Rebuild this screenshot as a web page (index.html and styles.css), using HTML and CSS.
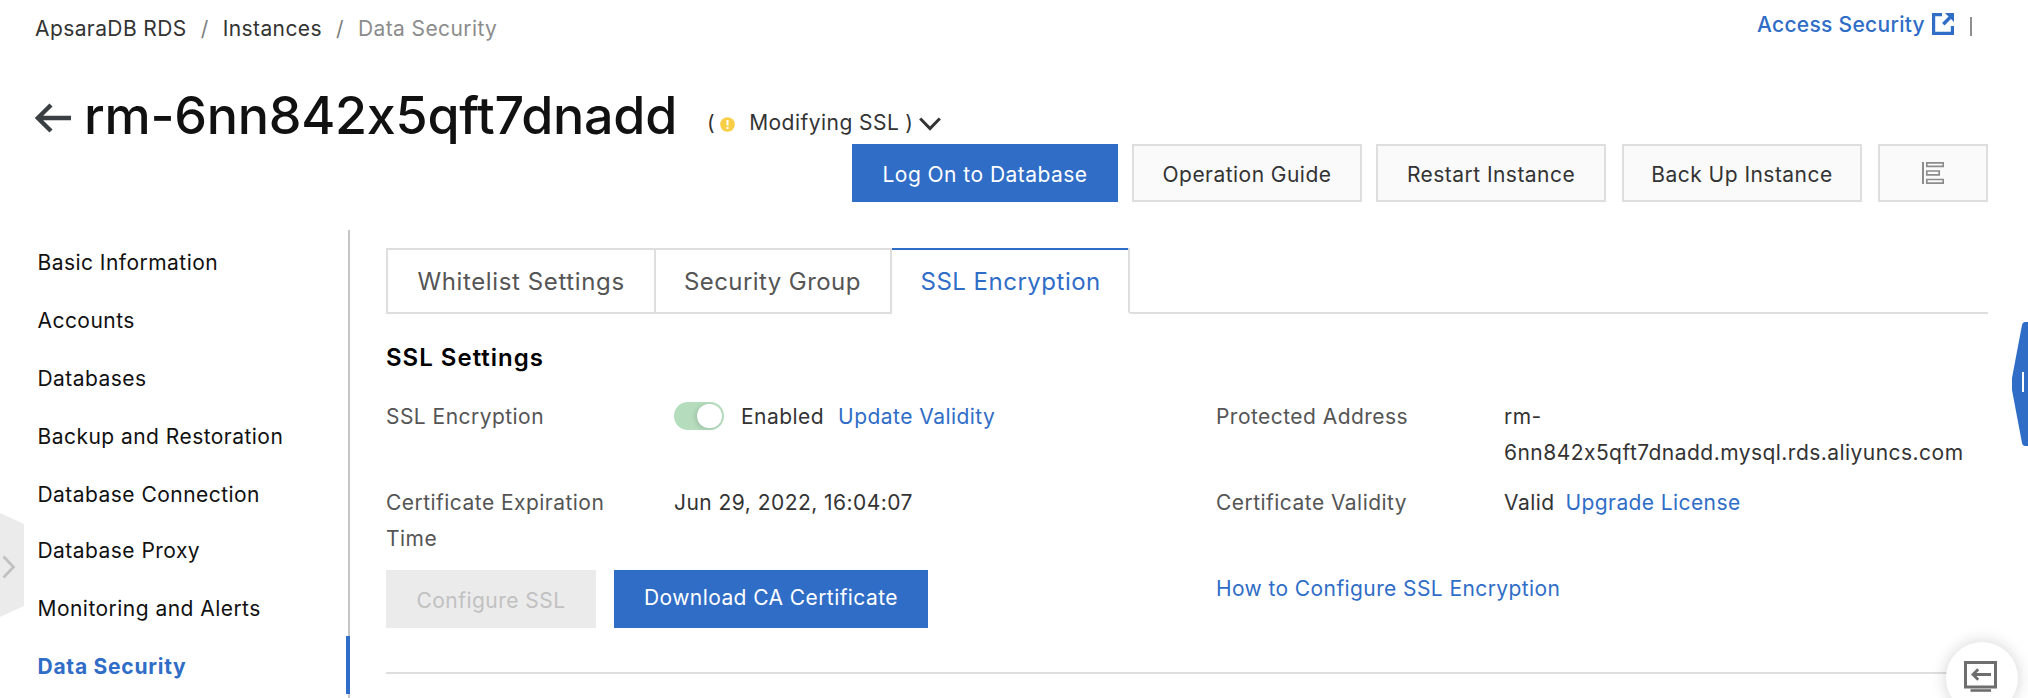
FILE: index.html
```html
<!DOCTYPE html>
<html lang="en">
<head>
<meta charset="utf-8">
<title>Data Security - ApsaraDB RDS</title>
<link rel="stylesheet" href="styles.css">
</head>
<body>
<header class="header">
  <div class="topbar">
    <nav class="crumbs">
      <a>ApsaraDB RDS</a><span class="sep">/</span><a>Instances</a><span class="sep">/</span><span class="current">Data Security</span>
    </nav>
    <div class="toplinks">
      <a class="access">Access Security</a>
      <svg class="ext" width="22" height="22" viewBox="0 0 22 22"><path d="M10 1.6H1.6V20.4H20.4V13" fill="none" stroke="#2f6dc7" stroke-width="3.2"/><path d="M11.3 11.2L18 4.5" stroke="#2f6dc7" stroke-width="3.4"/><path d="M13 0H22V9Z" fill="#2f6dc7"/></svg>
      <i class="bar"></i>
    </div>
  </div>
  <div class="titlebar">
    <svg class="back" width="36" height="30" viewBox="0 0 36 30"><path d="M36 15H3M16 2L2.800 15L16 28" fill="none" stroke="#3a3f44" stroke-width="4.400"/></svg>
    <h1>rm-6nn842x5qft7dnadd</h1>
    <div class="status">
      <span>(</span>
      <svg class="warn" width="15" height="15" viewBox="0 0 15 15"><circle cx="7.500" cy="7.500" r="7.300" fill="#f8ce46"/><path d="M7.500 3V8.600M7.500 10V12" stroke="#fff" stroke-width="2"/></svg>
      <span class="state">Modifying SSL</span><span class="close">)</span>
      <svg class="chev" width="22" height="14" viewBox="0 0 22 14"><path d="M1.200 1.500L11 11.500L20.800 1.500" fill="none" stroke="#333" stroke-width="3"/></svg>
    </div>
  </div>
  <div class="actions">
    <button class="btn primary logon">Log On to Database</button>
    <button class="btn guide">Operation Guide</button>
    <button class="btn restart">Restart Instance</button>
    <button class="btn backup">Back Up Instance</button>
    <button class="btn iconbtn"><svg width="22" height="22" viewBox="0 0 22 22" fill="none" stroke="#8c8c8c"><path d="M1 0V22" stroke-width="2"/><path d="M4.800 .8H21.200V4.300H4.800ZM4.800 9H17.200V12.800H4.800ZM4.800 17.500H21.200V21.100H4.800Z" stroke-width="1.700"/></svg></button>
  </div>
</header>
<div class="body">
  <aside class="side">
    <a>Basic Information</a>
    <a>Accounts</a>
    <a>Databases</a>
    <a>Backup and Restoration</a>
    <a class="short">Database Connection</a>
    <a>Database Proxy</a>
    <a>Monitoring and Alerts</a>
    <a class="active">Data Security</a>
  </aside>
  <main class="main">
    <div class="tabs">
      <div class="tab whitelist">Whitelist Settings</div>
      <div class="tab group">Security Group</div>
      <div class="tab ssl on">SSL Encryption</div>
      <div class="rest"></div>
    </div>
    <h2>SSL Settings</h2>
    <div class="grid">
      <div class="label">SSL Encryption</div>
      <div class="value toggle-row"><span class="switch"><i></i></span><span class="enabled">Enabled</span><a class="link">Update Validity</a></div>
      <div class="label">Protected Address</div>
      <div class="value">rm-<br>6nn842x5qft7dnadd.mysql.rds.aliyuncs.com</div>
      <div class="label narrow">Certificate Expiration Time</div>
      <div class="value">Jun 29, 2022, 16:04:07</div>
      <div class="label">Certificate Validity</div>
      <div class="value">Valid<a class="link upgrade">Upgrade License</a></div>
      <div class="buttons"><button class="btn disabled">Configure SSL</button><button class="btn primary download">Download CA Certificate</button></div>
      <div class="howto"><a class="link">How to Configure SSL Encryption</a></div>
    </div>
  </main>
</div>
<svg class="left-handle" width="24" height="104" viewBox="0 0 24 104"><path d="M0 0L24 11V93L0 104Z" fill="#ebebeb"/><path d="M3.500 43.500L13.500 54L3.500 64.500" fill="none" stroke="#c1c1c1" stroke-width="2.800"/></svg>
<svg class="right-handle" width="16" height="124" viewBox="0 0 16 124"><path d="M16 0H13.500Q10.500 0 10 3L0 56V68L10 121Q10.500 124 13.500 124H16Z" fill="#2f6dc7"/><path d="M11 50V70" stroke="#fff" stroke-width="2"/></svg>
<div class="fab"><svg width="34" height="32" viewBox="0 0 34 32" fill="none" stroke="#6e6e6e"><path d="M1.500 1.500H31.500V26H1.500Z" stroke-width="3"/><path d="M6.500 29.500H27" stroke-width="2.600"/><path d="M27 13.500H9M14.200 8.300L9 13.500L14.200 18.700" stroke-width="2.800"/></svg></div>
</body>
</html>
```

FILE: styles.css
```css
* { box-sizing: border-box; }
html, body { height: 100%; }
body {
  margin: 0;
  height: 698px;
  overflow: hidden;
  position: relative;
  display: flex;
  flex-direction: column;
  background: #fff;
  color: #333;
  font: 21px/36px Inter, "Liberation Sans", sans-serif;
  font-feature-settings: "calt" 0;
  letter-spacing: .46px;
  white-space: nowrap;
}
.header { height: 230px; flex: none; padding: 0 40px 0 35px; }
.topbar { height: 85px; display: flex; justify-content: space-between; }
.crumbs { padding-top: 11px; display: flex; letter-spacing: .4px; }
.sep { width: 36px; text-align: center; color: #808080; }
.current { color: #8c8c8c; }
.toplinks { display: flex; align-items: flex-start; padding: 7px 16px 0 0; }
.access { color: #2f6dc7; letter-spacing: .3px; font-weight: 500; }
.ext { margin: 6px 16px 0 7px; }
.bar { width: 2px; height: 19px; margin-top: 10px; background: #8f8f8f; }
.titlebar { height: 59px; display: flex; align-items: flex-start; }
.back { margin: 18px 13px 0 0; flex: none; }
h1 { margin: 1px 0 0; width: 623px; font-size: 52px; line-height: 60px; font-weight: 500; letter-spacing: -.26px; color: #111; }
.status { display: flex; padding-top: 20px; }
.warn { margin: 12px 14px 0 5px; }
.close { margin-left: 6px; }
.chev { margin: 12px 0 0 6px; }
.actions { display: flex; justify-content: flex-end; }
.btn {
  height: 58px;
  margin: 0;
  padding: 4px 0 0;
  border: 2px solid #dedede;
  background: #fafafa;
  color: #333;
  font: inherit;
  font-feature-settings: inherit;
  letter-spacing: inherit;
  text-align: center;
}
.btn.primary { background: #2f6dc7; border-color: #2f6dc7; color: #fff; }
.logon { width: 266px; margin-right: 14px; }
.guide { width: 230px; margin-right: 14px; }
.restart { width: 230px; margin-right: 16px; }
.backup { width: 240px; margin-right: 16px; }
.iconbtn { width: 110px; display: flex; justify-content: center; align-items: center; padding: 0; }
.body { flex: 1; display: flex; min-height: 0; }
.side { width: 350px; flex: none; border-right: 2px solid #c6c6c6; padding-top: 2px; }
.side a { display: block; height: 58px; padding: 3px 0 0 37.5px; line-height: 56px; color: #111; }
.side a.short { height: 56px; }
.side a.active { color: #2f6dc7; font-weight: 700; margin-right: -2px; border-right: 4px solid #2f6dc7; letter-spacing: .75px; }
.main { width: 1602px; margin-left: 36px; padding-top: 18px; }
.tabs { height: 66px; display: flex; font-size: 24px; letter-spacing: .5px; color: #555; }
.tab { border: 2px solid #dedede; border-left-width: 0; line-height: 63px; padding-left: 28px; }
.whitelist { width: 270px; border-left-width: 2px; padding-left: 29.5px; letter-spacing: .62px; }
.group { width: 236px; letter-spacing: .42px; }
.ssl { width: 238px; }
.tab.on { color: #2f6dc7; border-bottom-color: #fff; border-top: 0; padding: 0 0 0 28.5px; background: linear-gradient(#2f6dc7, #2f6dc7) no-repeat 0 0 / 100% 2px; line-height: 67px; }
.rest { flex: 1; border-bottom: 2px solid #dedede; }
h2 { margin: 26px 0 0; height: 59px; font-size: 24px; line-height: 36px; font-weight: 600; letter-spacing: 1px; color: #000; }
.grid {
  display: grid;
  grid-template-columns: 288px 542px 288px 1fr;
  grid-template-rows: 86px 85px 102px;
  border-bottom: 2px solid #dedede;
  height: 275px;
}
.label { color: #555; }
.narrow { width: 240px; white-space: normal; }
.link { color: #2f6dc7; }
.toggle-row { display: flex; }
.switch { width: 50px; height: 28px; border-radius: 14px; background: #b5dcbd; margin: 3px 17px 0 0; }
.switch i { display: block; width: 25px; height: 24px; border-radius: 12px; background: #fff; margin: 2px 0 0 23px; box-shadow: -2px 1px 4px rgba(0, 0, 0, .12); }
.enabled { margin-right: 14px; }
.upgrade { margin-left: 11px; letter-spacing: .4px; }
.buttons { grid-column: span 2; display: flex; }
.disabled { width: 210px; margin-right: 18px; background: #ebebeb; border-color: #ebebeb; color: #c1c1c1; }
.download { width: 314px; padding: 0 0 2px; letter-spacing: .42px; }
.howto { grid-column: span 2; padding-top: 1px; letter-spacing: .4px; }
.left-handle { position: absolute; left: 0; top: 513px; }
.right-handle { position: absolute; right: 0; top: 322px; }
.fab { position: absolute; left: 1946px; top: 642px; width: 72px; height: 72px; padding: 19px 0 0 18px; border-radius: 50%; background: #fff; box-shadow: 0 0 16px rgba(0, 0, 0, .18); line-height: 0; }
```
